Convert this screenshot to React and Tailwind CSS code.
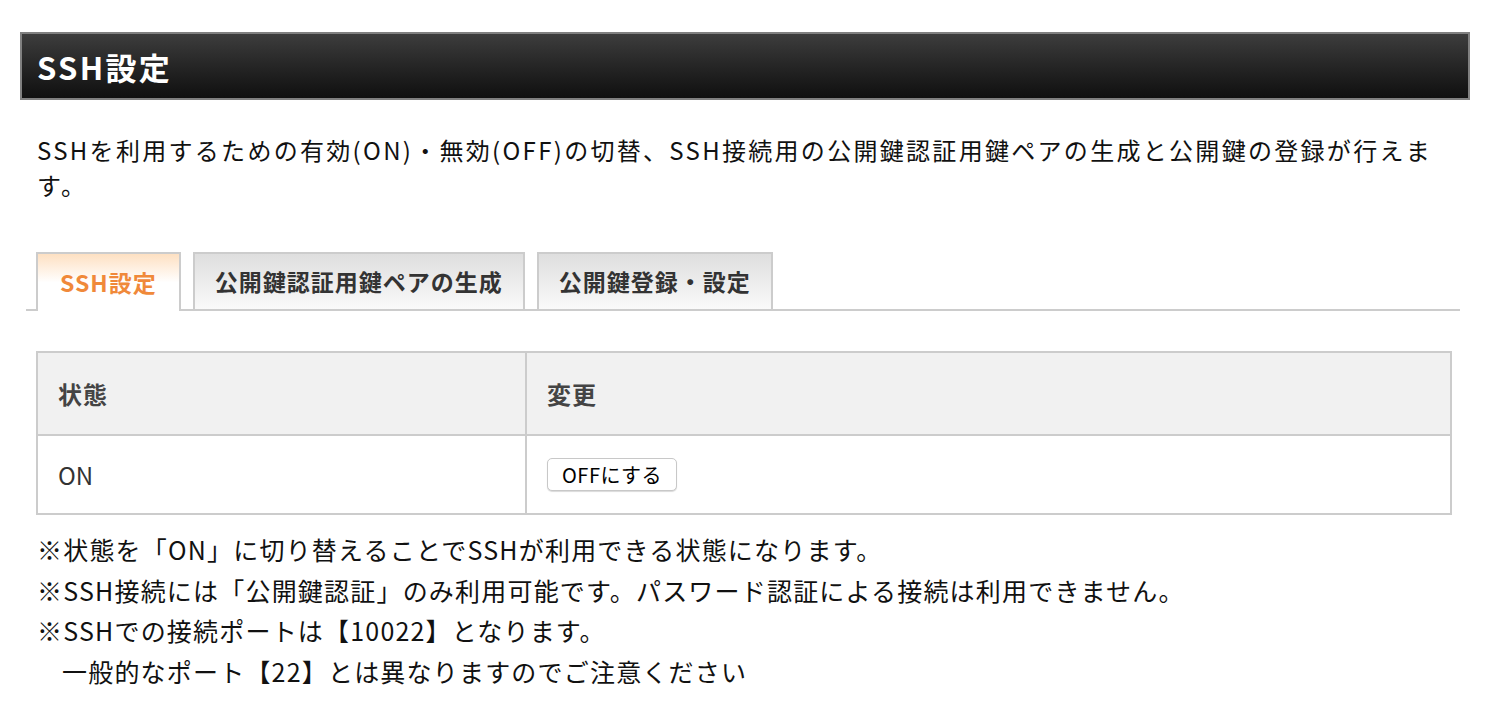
export default function App() {
  const font = { fontFamily: '"Noto Sans CJK JP", "Noto Sans", sans-serif' };
  return (
    <div className="min-h-screen bg-white pt-[32px] pl-[20px]" style={font}>
      {/* Title bar */}
      <div className="w-[1450px] h-[68px] border-2 border-[#808080] bg-gradient-to-b from-[#3d3d3d] to-[#101010] flex items-center pl-[15px]">
        <h1 className="text-[31px] font-bold text-white leading-none tracking-[2.3px]">SSH設定</h1>
      </div>

      <div className="pl-[6px] w-[1440px]">
        <p className="mt-[32px] pl-[11px] w-[1435px] text-[24px] leading-[35px] tracking-[2.3px] text-[#111]">
          SSHを利用するための有効(ON)・無効(OFF)の切替、SSH接続用の公開鍵認証用鍵ペアの生成と公開鍵の登録が行えます。
        </p>

        {/* Tabs */}
        <div className="mt-[50px] flex items-end gap-[12px] pl-[10px] border-b-2 border-[#cccccc] w-[1434px]">
          <div className="h-[59px] -mb-[2px] px-[22px] flex items-center border-2 border-b-0 border-[#cccccc] bg-gradient-to-b from-[#fde0c2] via-white to-white">
            <span className="text-[23px] font-bold tracking-[1px] text-[#f0893a]">SSH設定</span>
          </div>
          <div className="h-[57px] px-[20px] flex items-center border-2 border-b-0 border-[#cccccc] bg-gradient-to-b from-[#dedede] to-[#fafafa]">
            <span className="text-[23px] font-bold tracking-[1px] text-[#333]">公開鍵認証用鍵ペアの生成</span>
          </div>
          <div className="h-[57px] px-[20px] flex items-center border-2 border-b-0 border-[#cccccc] bg-gradient-to-b from-[#dedede] to-[#fafafa]">
            <span className="text-[23px] font-bold tracking-[1px] text-[#333]">公開鍵登録・設定</span>
          </div>
        </div>

        {/* Table */}
        <table className="mt-[40px] ml-[10px] w-[1416px] border-collapse border-2 border-[#cccccc]">
          <thead>
            <tr className="bg-[#f1f1f1] h-[83px]">
              <th className="w-[489px] border-2 border-[#cccccc] text-left pl-[20px] text-[24px] tracking-[1px] font-bold text-[#444]">状態</th>
              <th className="border-2 border-[#cccccc] text-left pl-[20px] text-[24px] tracking-[1px] font-bold text-[#444]">変更</th>
            </tr>
          </thead>
          <tbody>
            <tr className="h-[79px]">
              <td className="border-2 border-[#cccccc] pl-[20px] text-[24px] text-[#333]">ON</td>
              <td className="border-2 border-[#cccccc] pl-[20px]">
                <button className="h-[33px] px-[14px] rounded-[5px] border border-[#c8c8c8] bg-white shadow-[0_1px_1px_rgba(0,0,0,0.15)] text-[20px] tracking-[0.5px] leading-none text-black">
                  OFFにする
                </button>
              </td>
            </tr>
          </tbody>
        </table>

        {/* Notes */}
        <div className="mt-[14px] pl-[11px] text-[25px] leading-[40.5px] tracking-[1.2px] text-[#111]">
          <p>※状態を「ON」に切り替えることでSSHが利用できる状態になります。</p>
          <p>※SSH接続には「公開鍵認証」のみ利用可能です。パスワード認証による接続は利用できません。</p>
          <p>※SSHでの接続ポートは【10022】となります。</p>
          <p className="pl-[25px]">一般的なポート【22】とは異なりますのでご注意ください</p>
        </div>
      </div>
    </div>
  );
}
